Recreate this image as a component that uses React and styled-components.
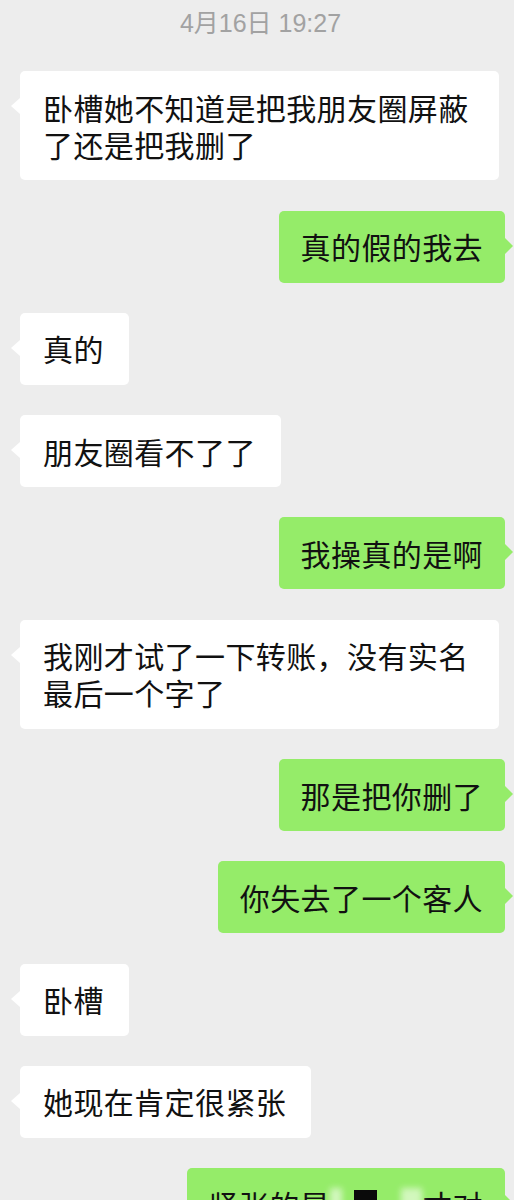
import React from 'react'
import styled, { createGlobalStyle } from 'styled-components'

const GlobalStyle = createGlobalStyle`
  html, body {
    margin: 0;
    padding: 0;
    background: #ededed;
  }
  body {
    font-family: "Noto Sans CJK SC", "Noto Sans", sans-serif;
  }
`;

const Chat = styled.div`
  display: flex;
  flex-direction: column;
  gap: 30.3px;
  width: 514px;
  height: 1200px;
  overflow: hidden;
`;

const Time = styled.div`
  flex: none;
  height: 41px;
  box-sizing: border-box;
  padding: 8px 0 0 7px;
  text-align: center;
  font-family: "Liberation Sans", "Noto Sans CJK SC", sans-serif;
  font-size: 25px;
  line-height: 30px;
  color: #a2a2a2;
`;

const Row = styled.div`
  flex: none;
  display: flex;
  justify-content: ${p => (p.$mine ? 'flex-end' : 'flex-start')};
  padding: 0 9px 0 20px;
`;

const Bubble = styled.div`
  position: relative;
  max-width: 479px;
  box-sizing: border-box;
  padding: 17.5px ${p => (p.$mine ? '22px 17.5px 22px' : '25px 17.5px 23px')};
  border-radius: 5px;
  background: ${p => (p.$mine ? '#95ec69' : '#ffffff')};
  color: #111;
  font-size: 30px;
  line-height: 37px;
  letter-spacing: 0.4px;

  &::before {
    content: "";
    position: absolute;
    top: 27px;
    ${p => (p.$mine ? 'right: -8px;' : 'left: -9px;')}
    border-style: solid;
    border-color: transparent;
    border-width: 8px ${p => (p.$mine ? '0 8px 8.5px' : '9px 8px 0')};
    ${p => (p.$mine ? 'border-left-color: #95ec69;' : 'border-right-color: #ffffff;')}
  }
`;

const Censor = styled.span`
  display: inline-flex;
  align-items: flex-start;
  width: 92px;
  height: 37px;
  vertical-align: top;
`;

const Smudge = styled.span`
  display: block;
  flex: none;
  width: ${p => p.$w}px;
  height: 32px;
  margin: 2px 0 0 ${p => p.$gap}px;
  background: rgba(225, 250, 210, 0.8);
  filter: blur(3px);
`;

const Block = styled.span`
  display: block;
  flex: none;
  width: 23px;
  height: 30px;
  margin: 4px 0 0 ${p => p.$gap}px;
  background: #0a0a0a;
`;

const messages = [
  { mine: false, text: '卧槽她不知道是把我朋友圈屏蔽了还是把我删了' },
  { mine: true, text: '真的假的我去' },
  { mine: false, text: '真的' },
  { mine: false, text: '朋友圈看不了了' },
  { mine: true, text: '我操真的是啊' },
  { mine: false, text: '我刚才试了一下转账，没有实名最后一个字了' },
  { mine: true, text: '那是把你删了' },
  { mine: true, text: '你失去了一个客人' },
  { mine: false, text: '卧槽' },
  { mine: false, text: '她现在肯定很紧张' },
];

const App = () => {
  return (
    <>
      <GlobalStyle />
      <Chat>
        <Time>4月16日 19:27</Time>
        {messages.map((m, i) => (
          <Row key={i} $mine={m.mine}>
            <Bubble $mine={m.mine}>{m.text}</Bubble>
          </Row>
        ))}
        <Row $mine>
          <Bubble $mine>
            紧张的是
            <Censor>
              <Smudge $gap={0} $w={12} />
              <Block $gap={12} />
              <Smudge $gap={24} $w={21} />
            </Censor>
            才对
          </Bubble>
        </Row>
      </Chat>
    </>
  );
}

export default App
